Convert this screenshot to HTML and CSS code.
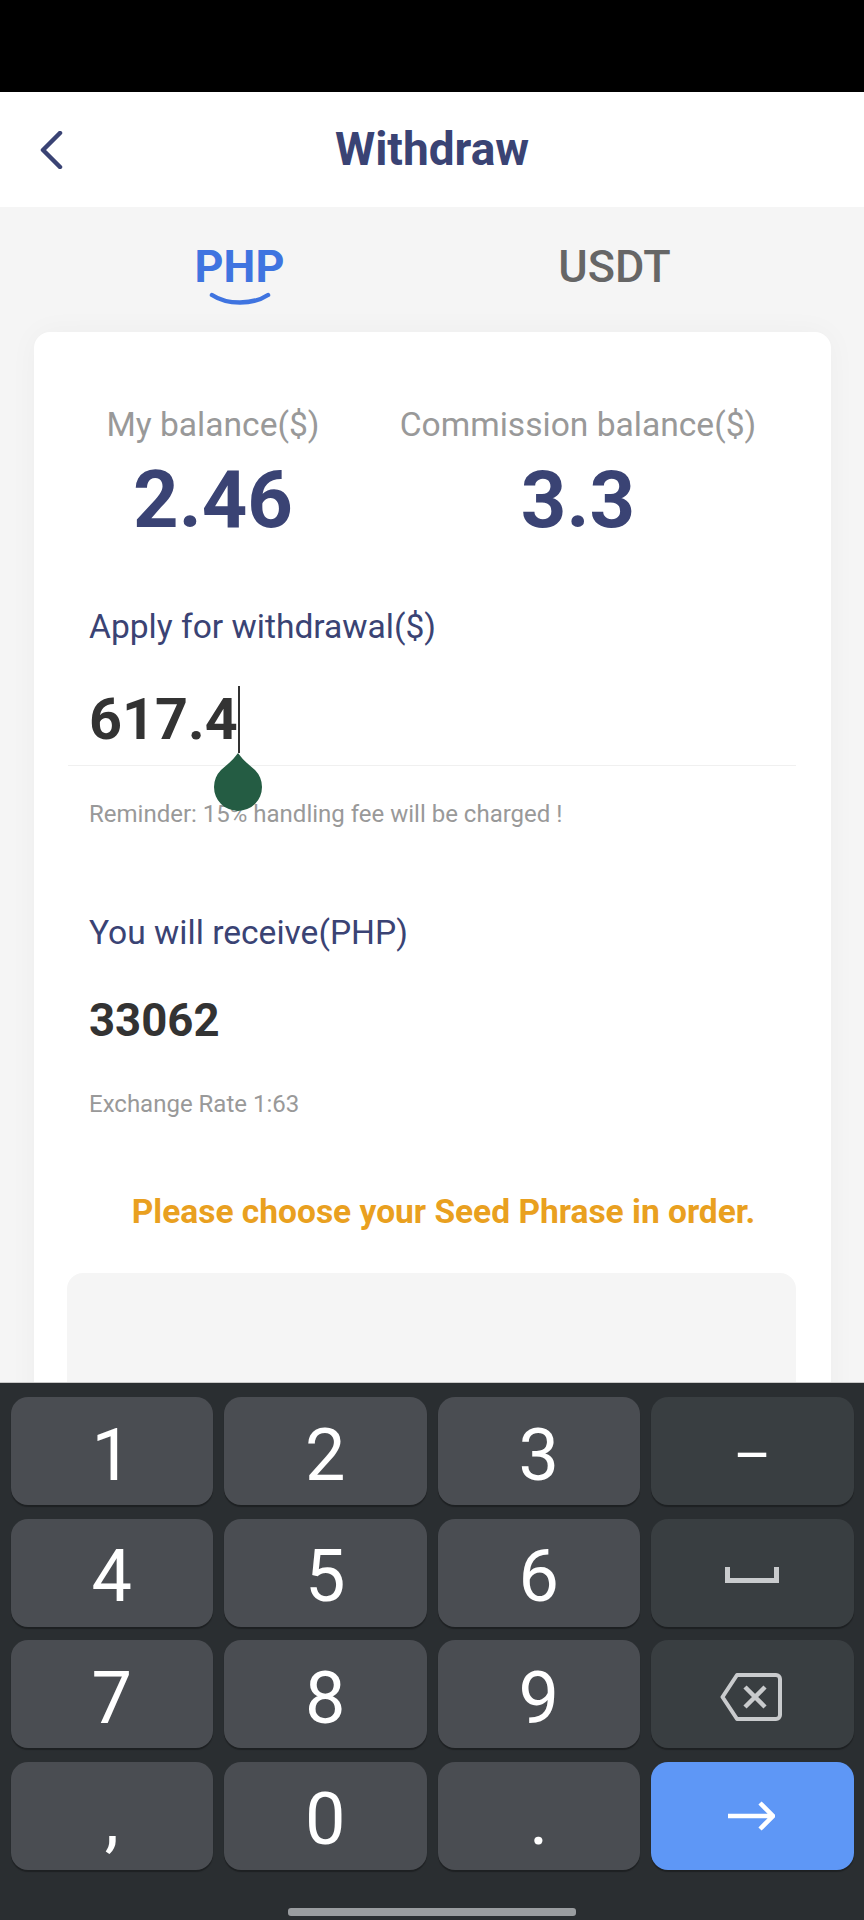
FILE: index.html
```html
<!DOCTYPE html>
<html lang="en">
<head>
<meta charset="utf-8">
<title>Withdraw</title>
<link rel="stylesheet" href="styles.css">
</head>
<body>
<div class="screen">
  <div class="status"></div>
  <header class="header">
    <svg class="back" width="24" height="38" viewBox="0 0 24 38"><path d="M21 2 4 19l17 17" fill="none" stroke="#3a4374" stroke-width="4.500" stroke-linecap="round" stroke-linejoin="round"/></svg>
    <h1 class="title">Withdraw</h1>
    <span></span>
  </header>
  <main class="content">
    <nav class="tabs">
      <div class="tab tab-active">PHP
        <svg class="smile" width="62" height="14" viewBox="0 0 62 14"><path d="M3 3C18 13 44 13 59 3" fill="none" stroke="#3f74e0" stroke-width="4.5" stroke-linecap="round"/></svg>
      </div>
      <div class="tab">USDT</div>
    </nav>
    <section class="card">
      <div class="balances">
        <div class="bal bal-a">
          <div class="bal-label">My balance($)</div>
          <div class="bal-value">2.46</div>
        </div>
        <div class="bal bal-b">
          <div class="bal-label">Commission balance($)</div>
          <div class="bal-value">3.3</div>
        </div>
      </div>
      <div class="field-label apply">Apply for withdrawal($)</div>
      <div class="input-row">
        <span class="input-value">617.4</span><span class="caret"><svg class="handle" width="48" height="58" viewBox="0 0 48 58"><path d="M24 0C29 7 35 12 41 17A24 24 0 1 1 7 17C13 12 19 7 24 0Z" fill="#245c43"/></svg></span>
      </div>
      <div class="hint reminder">Reminder: 15% handling fee will be charged !</div>
      <div class="field-label receive">You will receive(PHP)</div>
      <div class="amount">33062</div>
      <div class="hint rate">Exchange Rate 1:63</div>
      <div class="notice">Please choose your Seed Phrase in order.</div>
      <div class="seed-box"></div>
    </section>
  </main>
  <div class="keyboard">
    <div class="keys">
      <div class="key">1</div>
      <div class="key">2</div>
      <div class="key">3</div>
      <div class="key key-fn key-dash">–</div>
      <div class="key">4</div>
      <div class="key">5</div>
      <div class="key">6</div>
      <div class="key key-fn">
        <svg class="icon-space" width="56" height="17" viewBox="0 0 56 17"><path d="M3.5 0v13.500h49V0" fill="none" stroke="#c9cbcd" stroke-width="5"/></svg>
      </div>
      <div class="key">7</div>
      <div class="key">8</div>
      <div class="key">9</div>
      <div class="key key-fn">
        <svg class="icon-back" width="62" height="48" viewBox="0 0 62 48"><path d="M17 2H56a4 4 0 0 1 4 4V42a4 4 0 0 1-4 4H17L2.500 24Z" fill="none" stroke="#c9cbcd" stroke-width="4" stroke-linejoin="round"/><path d="M25 14 45 34M45 14 25 34" fill="none" stroke="#c9cbcd" stroke-width="4.500"/></svg>
      </div>
      <div class="key">,</div>
      <div class="key">0</div>
      <div class="key">.</div>
      <div class="key key-go">
        <svg class="icon-go" width="48" height="30" viewBox="0 0 48 30"><path d="M1 15H45M33 2 46 15 33 28" fill="none" stroke="#fff" stroke-width="4.500"/></svg>
      </div>
    </div>
    <div class="home-bar"></div>
  </div>
</div>
</body>
</html>
```
FILE: styles.css
```css
* { box-sizing: border-box; margin: 0; padding: 0; }
html, body { height: 100%; }
body { font-family: Roboto, "Liberation Sans", sans-serif; background: #000; }
.screen { width: 864px; height: 1920px; display: flex; flex-direction: column; overflow: hidden; }
.status { height: 92px; flex: none; background: #000; }
.header { height: 115px; flex: none; background: #fff; display: grid; grid-template-columns: 1fr auto 1fr; align-items: center; }
.back { display: block; margin-left: 39px; }
.title { font-size: 46px; line-height: 115px; font-weight: 700; color: #3a4374; }
.content { flex: 1; min-height: 0; overflow: hidden; background: #f5f5f5; }
.tabs { height: 125px; padding-top: 35px; padding-right: 10px; display: flex; justify-content: center; }
.tab { width: 375px; text-align: center; font-size: 45px; line-height: 50px; font-weight: 500; color: #666; }
.tab-active { color: #3f74e0; font-weight: 700; }
.smile { display: block; margin: 0 auto; }
.card { margin: 0 33px 0 34px; padding: 73px 34px 40px; background: #fff; border-radius: 16px 16px 0 0; box-shadow: 0 0 30px rgba(0,0,0,.035); }
.balances { display: flex; margin-left: -20px; }
.bal { text-align: center; }
.bal-a { width: 330px; }
.bal-b { width: 400px; }
.bal-label { font-size: 33.6px; line-height: 40px; color: #999; }
.bal-value { margin-top: 15px; font-size: 79.5px; line-height: 80px; font-weight: 700; color: #3a4374; }
.field-label { padding-left: 21px; font-size: 33.6px; line-height: 40px; color: #3a4374; }
.apply { margin-top: 67px; }
.input-row { margin: 43px 1px 0 0; height: 76px; padding: 0 21px; border-bottom: 1px solid #f0f0f0; display: flex; font-size: 57.5px; line-height: 60px; font-weight: 700; color: #333; }
.caret { position: relative; display: block; width: 2px; height: 67px; margin-top: -4px; background: #333; }
.handle { position: absolute; left: -24px; top: 67px; display: block; }
.hint { padding-left: 21px; font-size: 24px; line-height: 30px; color: #999; }
.reminder { margin-top: 33px; }
.receive { margin-top: 84px; }
.amount { margin-top: 43px; padding-left: 21px; font-size: 45.5px; line-height: 50px; font-weight: 700; color: #333; }
.rate { margin-top: 43px; }
.notice { margin-top: 73px; padding-left: 22px; text-align: center; font-size: 33.5px; line-height: 40px; font-weight: 700; color: #e9a020; }
.seed-box { margin: 41px 1px 0 -1px; height: 300px; border-radius: 16px; background: #f5f5f5; }
.keyboard { height: 538px; flex: none; background: #2a2e31; border-top: 1px solid #c8c8c8; padding: 14px 10.5px 4px; display: flex; flex-direction: column; }
.keys { display: grid; grid-template-columns: repeat(4, 1fr); grid-auto-rows: 108px; column-gap: 11px; row-gap: 13.67px; }
.key { display: flex; align-items: center; justify-content: center; padding-top: 9px; border-radius: 17px; background: #4a4d52; box-shadow: 0 2px 1px rgba(0,0,0,.3); font-size: 72px; line-height: 100px; font-weight: 400; color: #fff; }
.key-fn { background: #393e41; padding-top: 0; }
.key-dash { padding-top: 8px; font-size: 58px; }
.key-go { background: #5e97f6; padding-top: 0; }
.icon-space { margin: 5px 1px 0 0; }
.icon-back { margin: 5px 2px 0 0; }
.icon-go { margin-right: 2px; }
.home-bar { width: 288px; height: 8px; margin: auto auto 0; border-radius: 3px; background: #9a9da0; }
```
